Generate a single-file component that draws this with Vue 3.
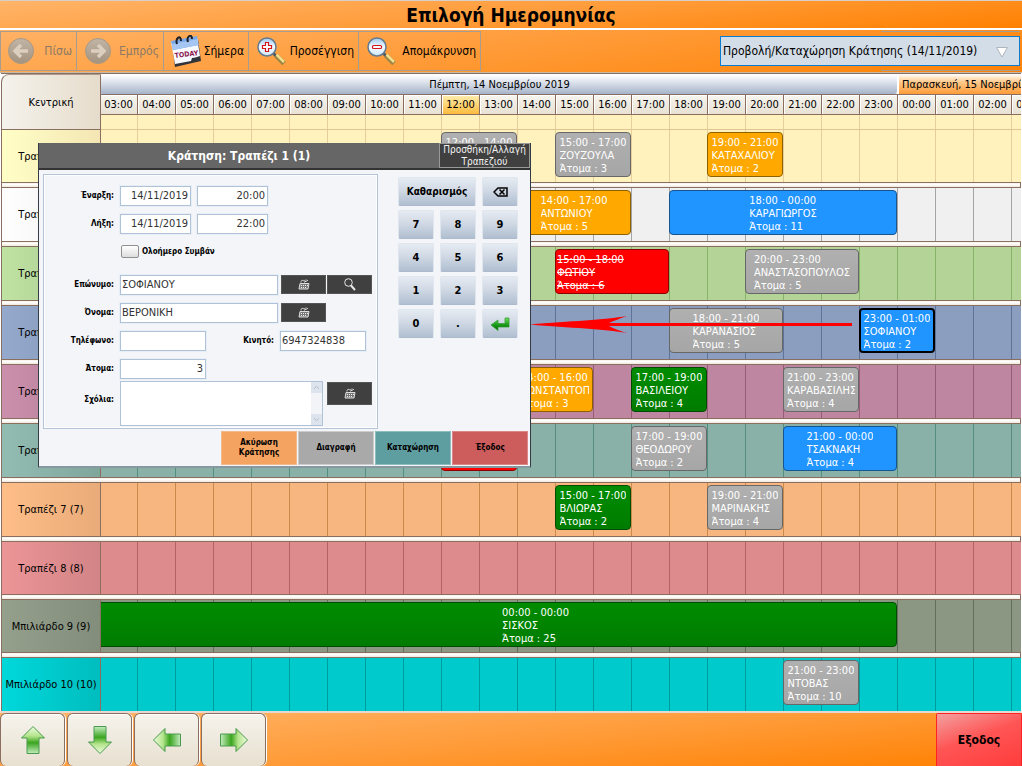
<script setup>
import { ref } from 'vue'

const START = 3
const hours = Array.from({ length: 25 }, (_, i) => String((START + i) % 24).padStart(2, '0') + ':00')

const rows = [
  { name: 'Τραπέζι 1 (1)', tone: 'cream', short: true, events: [
    { from: 12, to: 14, time: '12:00 - 14:00', who: 'ΠΑΠΠΑΣ', people: 2, kind: 'gray' },
    { from: 15, to: 17, time: '15:00 - 17:00', who: 'ΖΟΥΖΟΥΛΑ', people: 3, kind: 'gray' },
    { from: 19, to: 21, time: '19:00 - 21:00', who: 'ΚΑΤΑΧΑΛΙΟΥ', people: 2, kind: 'amber' }] },
  { name: 'Τραπέζι 2 (2)', tone: 'white', events: [
    { from: 14, to: 17, time: '14:00 - 17:00', who: 'ΑΝΤΩΝΙΟΥ', people: 5, kind: 'amber' },
    { from: 18, to: 24, time: '18:00 - 00:00', who: 'ΚΑΡΑΓΙΩΡΓΟΣ', people: 11, kind: 'blue' }] },
  { name: 'Τραπέζι 3 (3)', tone: 'lime', events: [
    { from: 15, to: 18, time: '15:00 - 18:00', who: 'ΦΩΤΙΟΥ', people: 6, kind: 'red' },
    { from: 20, to: 23, time: '20:00 - 23:00', who: 'ΑΝΑΣΤΑΣΟΠΟΥΛΟΣ', people: 5, kind: 'gray' }] },
  { name: 'Τραπέζι 4 (4)', tone: 'steel', events: [
    { from: 18, to: 21, time: '18:00 - 21:00', who: 'ΚΑΡΑΝΑΣΙΟΣ', people: 5, kind: 'gray' },
    { from: 23, to: 25, time: '23:00 - 01:00', who: 'ΣΟΦΙΑΝΟΥ', people: 2, kind: 'blue selected' }] },
  { name: 'Τραπέζι 5 (5)', tone: 'mauve', events: [
    { from: 14, to: 16, time: '14:00 - 16:00', who: 'ΚΩΝΣΤΑΝΤΟΠΟΥΛΟΣ', people: 3, kind: 'amber' },
    { from: 17, to: 19, time: '17:00 - 19:00', who: 'ΒΑΣΙΛΕΙΟΥ', people: 4, kind: 'green' },
    { from: 21, to: 23, time: '21:00 - 23:00', who: 'ΚΑΡΑΒΑΣΙΛΗΣ', people: 4, kind: 'gray' }] },
  { name: 'Τραπέζι 6 (6)', tone: 'sage', events: [
    { from: 12, to: 14, time: '12:00 - 14:00', who: 'ΝΙΚΟΥ', people: 2, kind: 'red' },
    { from: 17, to: 19, time: '17:00 - 19:00', who: 'ΘΕΟΔΩΡΟΥ', people: 2, kind: 'gray' },
    { from: 21, to: 24, time: '21:00 - 00:00', who: 'ΤΣΑΚΝΑΚΗ', people: 4, kind: 'blue' }] },
  { name: 'Τραπέζι 7 (7)', tone: 'peach', events: [
    { from: 15, to: 17, time: '15:00 - 17:00', who: 'ΒΛΙΩΡΑΣ', people: 2, kind: 'green' },
    { from: 19, to: 21, time: '19:00 - 21:00', who: 'ΜΑΡΙΝΑΚΗΣ', people: 4, kind: 'gray' }] },
  { name: 'Τραπέζι 8 (8)', tone: 'rose', short: true, events: [] },
  { name: 'Μπιλιάρδο 9 (9)', tone: 'moss', short: true, events: [
    { from: 3, to: 24, time: '00:00 - 00:00', who: 'ΣΙΣΚΟΣ', people: 25, kind: 'green continued' }] },
  { name: 'Μπιλιάρδο 10 (10)', tone: 'cyan', events: [
    { from: 21, to: 23, time: '21:00 - 23:00', who: 'ΝΤΟΒΑΣ', people: 10, kind: 'gray' }] }
]

const span = (e) => ({ gridColumn: `${e.from - START + 1} / ${e.to - START + 1}` })

const view = ref('day')
const form = ref({
  startDate: '14/11/2019', startTime: '20:00', endDate: '14/11/2019', endTime: '22:00', allDay: false,
  last: 'ΣΟΦΙΑΝΟΥ', first: 'ΒΕΡΟΝΙΚΗ', phone: '', mobile: '6947324838', people: '3', notes: ''
})
const keys = ['7', '8', '9', '4', '5', '6', '1', '2', '3', '0', '.']
const directions = [
  { label: 'Πάνω', turn: 'up' }, { label: 'Κάτω', turn: 'down' },
  { label: 'Αριστερά', turn: 'left' }, { label: 'Δεξιά', turn: 'right' }
]
</script>

<template>
  <div class="app">
    <svg class="defs" width="0" height="0" aria-hidden="true">
      <defs>
        <linearGradient id="arrowFill" x1="0" y1="0" x2="0" y2="1">
          <stop offset="0" stop-color="#effbe0" /><stop offset=".35" stop-color="#b4e58c" />
          <stop offset=".6" stop-color="#3aa51f" /><stop offset="1" stop-color="#c4ecc0" />
        </linearGradient>
        <linearGradient id="lensFill" x1="0" y1="0" x2="0" y2="1">
          <stop offset="0" stop-color="#9cc9ee" /><stop offset=".5" stop-color="#f4faff" /><stop offset="1" stop-color="#cfe9fb" />
        </linearGradient>
        <linearGradient id="discFill" x1="0" y1="0" x2="0" y2="1">
          <stop offset="0" stop-color="#c2b5a6" /><stop offset="1" stop-color="#a3937f" />
        </linearGradient>
        <linearGradient id="enterFill" x1="0" y1="0" x2="0" y2="1">
          <stop offset="0" stop-color="#6fe05a" /><stop offset=".6" stop-color="#149414" /><stop offset="1" stop-color="#0b6e0b" />
        </linearGradient>
        <symbol id="keyboard" viewBox="0 0 12 11">
          <path d="M2 4.500h9l-1 5.500H1z" fill="#777" stroke="#ddd" />
          <path d="M3 6.500h7M3 8.500h6" stroke="#eee" stroke-dasharray="1 1" />
          <path d="M3 3.500c0-2 1-2.500 2-2s2 .5 3-1M6 3.500c1-1.500 3-1 4-2.500" fill="none" stroke="#ddd" />
        </symbol>
      </defs>
    </svg>

    <h1 class="title">Επιλογή Ημερομηνίας</h1>

    <header class="toolbar">
      <button type="button" class="tool back" disabled>
        <svg width="28" height="28" viewBox="0 0 28 28"><circle cx="14" cy="14" r="12.500" fill="url(#discFill)" stroke="#a59886" /><path d="M14 8l-6 6 6 6M8 14h13" fill="none" stroke="#dccfc0" stroke-width="3.500" /></svg>
        <span>Πίσω</span>
      </button>
      <button type="button" class="tool forward" disabled>
        <svg width="28" height="28" viewBox="0 0 28 28"><circle cx="14" cy="14" r="12.500" fill="url(#discFill)" stroke="#a59886" /><path d="M14 8l6 6-6 6M20 14H7" fill="none" stroke="#dccfc0" stroke-width="3.500" /></svg>
        <span>Εμπρός</span>
      </button>
      <button type="button" class="tool today">
        <svg width="32" height="32" viewBox="0 0 32 32">
          <path d="M2 9l26-5 3 22-26 6z" fill="#30353c" />
          <path d="M1 7l26-5 3 19q-5 2-8 2l-1 3-16 3z" fill="#f8faff" />
          <path d="M1 6l26-5 1.500 9L3 15z" fill="#78a8e8" />
          <path d="M2 9l26-5 .5 6L3 15z" fill="#a5c6f3" />
          <path d="M7 9c-2-6 4-10 4-3M18 7c-2-6 4-9 4-3" fill="none" stroke="#1d2127" stroke-width="2" />
          <text x="5" y="23" transform="rotate(-7 5 23)" class="today-text">TODAY</text>
        </svg>
        <span>Σήμερα</span>
      </button>
      <button type="button" class="tool zoom-in">
        <svg width="30" height="30" viewBox="0 0 30 30"><path d="M17 17l4 4" stroke="#4d5963" stroke-width="3" /><path d="M20 19.500l8 8" stroke="#9a8747" stroke-width="5" /><path d="M20.500 18.500l7.500 7.500" stroke="#f2de8b" stroke-width="2.500" /><circle cx="11" cy="11" r="9" fill="url(#lensFill)" stroke="#617a90" stroke-width="1.500" /><path d="M9.500 6.500h3v3h3v3h-3v3h-3v-3h-3v-3h3z" fill="#fff" stroke="#d4141c" stroke-width="1.200" /></svg>
        <span>Προσέγγιση</span>
      </button>
      <button type="button" class="tool zoom-out">
        <svg width="30" height="30" viewBox="0 0 30 30"><path d="M17 17l4 4" stroke="#4d5963" stroke-width="3" /><path d="M20 19.500l8 8" stroke="#9a8747" stroke-width="5" /><path d="M20.500 18.500l7.500 7.500" stroke="#f2de8b" stroke-width="2.500" /><circle cx="11" cy="11" r="9" fill="url(#lensFill)" stroke="#617a90" stroke-width="1.500" /><rect x="6.500" y="9.500" width="9" height="3" rx="1" fill="#fff" stroke="#d4141c" stroke-width="1.200" /></svg>
        <span>Απομάκρυνση</span>
      </button>
      <div class="view">
        <div class="view-box">
          <select v-model="view" aria-label="Προβολή">
            <option value="day">Προβολή/Καταχώρηση Κράτησης (14/11/2019)</option>
          </select>
          <svg class="caret" width="14" height="12" viewBox="0 0 14 12"><path d="M1.500 1.500h11L7 11z" fill="#fff" stroke="#aeb4ba" /></svg>
        </div>
      </div>
    </header>

    <main class="planner">
      <div class="head">
        <div class="corner">Κεντρική</div>
        <div class="scale">
          <div class="days">
            <div class="day first">Πέμπτη, 14 Νοεμβρίου 2019</div>
            <div class="day next">Παρασκευή, 15 Νοεμβρίου 2019</div>
          </div>
          <div class="hours">
            <div v-for="(h, i) in hours" :key="i" class="hour" :class="{ now: h === '12:00' }">{{ h }}</div>
          </div>
          <div class="band"></div>
        </div>
      </div>

      <div v-for="r in rows" :key="r.name" class="row" :class="[r.tone, { short: r.short }]">
        <div class="name"><span>{{ r.name }}</span></div>
        <div class="lane">
          <article v-for="e in r.events" :key="e.from" class="event" :class="e.kind" :style="span(e)">
            <div class="info">{{ e.time }}<br />{{ e.who }}<br />Άτομα : {{ e.people }}</div>
          </article>
        </div>
      </div>

      <svg class="pointer" width="322" height="18" viewBox="0 0 322 18" aria-hidden="true">
        <path d="M0 8.500C40 5 75 4 97 0c-8 3-14 5-18 7h243v3H79c4 2 10 5 18 7-22-4-57-5-97-8.500z" fill="#f00" />
      </svg>

      <section class="dialog" role="dialog" aria-labelledby="dialog-title">
        <div class="dialog-bar">
          <h2 id="dialog-title">Κράτηση: Τραπέζι 1 (1)</h2>
          <button type="button" class="change">Προσθήκη/Αλλαγή Τραπεζιού</button>
        </div>
        <div class="dialog-main">
          <form class="fields" @submit.prevent>
            <div class="line">
              <label for="start">Έναρξη:</label>
              <input id="start" v-model="form.startDate" class="field date num" />
              <input v-model="form.startTime" class="field date num" aria-label="Ώρα έναρξης" />
            </div>
            <div class="line">
              <label for="end">Λήξη:</label>
              <input id="end" v-model="form.endDate" class="field date num" />
              <input v-model="form.endTime" class="field date num" aria-label="Ώρα λήξης" />
            </div>
            <div class="line check-line">
              <input id="allday" v-model="form.allDay" type="checkbox" class="check" />
              <label for="allday">Ολοήμερο Συμβάν</label>
            </div>
            <div class="line spaced">
              <label for="last">Επώνυμο:</label>
              <input id="last" v-model="form.last" class="field name-field" />
              <span class="pair">
                <button type="button" class="dark" aria-label="Πληκτρολόγιο"><svg width="12" height="11"><use href="#keyboard" /></svg></button>
                <button type="button" class="dark" aria-label="Αναζήτηση"><svg width="12" height="13" viewBox="0 0 12 13"><circle cx="4.500" cy="4.500" r="3.800" fill="none" stroke="#e8e8e8" /><path d="M7 7.500l4 4.500" stroke="#e8e8e8" stroke-width="2" /></svg></button>
              </span>
            </div>
            <div class="line">
              <label for="first">Όνομα:</label>
              <input id="first" v-model="form.first" class="field name-field" />
              <span class="pair">
                <button type="button" class="dark" aria-label="Πληκτρολόγιο"><svg width="12" height="11"><use href="#keyboard" /></svg></button>
              </span>
            </div>
            <div class="line">
              <label for="phone">Τηλέφωνο:</label>
              <input id="phone" v-model="form.phone" class="field phone" />
              <label for="mobile" class="second">Κινητό:</label>
              <input id="mobile" v-model="form.mobile" class="field phone" />
            </div>
            <div class="line">
              <label for="people">Άτομα:</label>
              <input id="people" v-model="form.people" class="field phone num" />
            </div>
            <div class="line notes-line">
              <label for="notes">Σχόλια:</label>
              <div class="notes">
                <textarea id="notes" v-model="form.notes"></textarea>
                <div class="scroll" aria-hidden="true">
                  <svg width="11" height="11" viewBox="0 0 11 11"><path d="M3 7l2.500-3L8 7" fill="none" stroke="#b8c2d0" /></svg>
                  <svg width="11" height="11" viewBox="0 0 11 11"><path d="M3 4l2.500 3L8 4" fill="none" stroke="#b8c2d0" /></svg>
                </div>
              </div>
              <button type="button" class="dark tall" aria-label="Πληκτρολόγιο"><svg width="12" height="11"><use href="#keyboard" /></svg></button>
            </div>
          </form>
          <div class="keypad">
            <button type="button" class="key clear">Καθαρισμός</button>
            <button type="button" class="key" aria-label="Διαγραφή χαρακτήρα"><svg width="15" height="10" viewBox="0 0 15 10"><path d="M5 1h9v8H5L1 5z" fill="none" stroke="#000" stroke-width="1.500" /><path d="M6.500 2.500l5 5M11.500 2.500l-5 5" stroke="#000" stroke-width="1.500" /></svg></button>
            <button v-for="k in keys" :key="k" type="button" class="key">{{ k }}</button>
            <button type="button" class="key" aria-label="Εισαγωγή"><svg width="20" height="14" viewBox="0 0 20 14"><path d="M15 1h4v9H8v3.500L1 8l7-5v3.500h7z" fill="url(#enterFill)" stroke="#2c9a28" stroke-width=".7" /></svg></button>
          </div>
        </div>
        <div class="actions">
          <button type="button" class="action cancel">Ακύρωση<br />Κράτησης</button>
          <button type="button" class="action delete">Διαγραφή</button>
          <button type="button" class="action save">Καταχώρηση</button>
          <button type="button" class="action close">Έξοδος</button>
        </div>
      </section>
    </main>

    <footer class="footer">
      <button v-for="d in directions" :key="d.turn" type="button" class="nav" :aria-label="d.label">
        <svg :class="d.turn" width="28" height="30" viewBox="0 0 28 30"><path d="M14 1.500L25.500 13H20v15.500H8V13H2.500z" fill="url(#arrowFill)" stroke="#4a9a50" /></svg>
      </button>
      <button type="button" class="exit">Εξοδος</button>
    </footer>
  </div>
</template>

<style>
body { margin: 0; background: #fff; }
</style>

<style scoped>
.app, button, input, textarea, select { font-family: "DejaVu Sans Condensed", "Noto Sans", sans-serif; }
.app { font-size: 11px; color: #000; min-height: 100vh; display: flex; flex-direction: column; overflow: hidden; }
.app *, .app *::before { box-sizing: border-box; }
.defs { position: absolute; }
button { margin: 0; padding: 0; color: #000; cursor: pointer; }

.title { margin: 0; height: 28px; line-height: 29px; text-align: center; font-size: 19px; font-weight: bold; border-top: 1px solid #d8d0c8; background: linear-gradient(175deg, #ffb469 0%, #ff9c3a 50%, #ff8000 100%); }
.toolbar { height: 43px; margin-top: 2px; padding-top: 1px; display: flex; background: linear-gradient(172deg, #ffb266 0%, #ff9a36 50%, #ff8205 100%); border-bottom: 1px solid #c8b8a8; }
.tool { height: 40px; display: flex; align-items: center; justify-content: space-between; border: 1px solid #a69c90; border-left-width: 0; background: none; font-size: 12px; padding: 0 4px 0 7px; white-space: nowrap; }
.tool svg { flex: none; }
.tool:disabled { color: #8d7a66; }
.back { width: 77px; border-left-width: 1px; padding-left: 6px; }
.forward { width: 87px; }
.today { width: 85px; padding-left: 6px; }
.zoom-in { width: 110px; }
.zoom-out { width: 122px; }
.today-text { font: bold 7px "DejaVu Sans Condensed", sans-serif; fill: #8b1550; }
.view { margin-left: auto; margin-right: 2px; width: 300px; height: 40px; display: flex; align-items: center; background: linear-gradient(#a69c90, #a69c90) right top / 139px 1px no-repeat, linear-gradient(#a69c90, #a69c90) right bottom / 139px 1px no-repeat; }
.view-box { position: relative; width: 100%; }
select { width: 100%; height: 30px; appearance: none; border: 1px solid #0b7bd0; border-radius: 0; background: #d3dde7; font-size: 12px; padding: 0 20px 0 2px; color: #000; }
.caret { position: absolute; right: 11px; top: 10px; pointer-events: none; }

.planner { position: relative; padding-left: 1px; border-right: 1px solid #fff; border-bottom: 2px solid #e4d8d0; overflow: hidden; --line: #8a6f60; }
.head { display: flex; height: 57px; border-top: 1px solid var(--line); border-bottom: 1px solid #e0c494; }
.corner { flex: none; width: 100px; display: flex; align-items: center; justify-content: center; border: 1px solid var(--line); border-top-color: #b09a8c; border-radius: 8px 0 0 0; margin-bottom: -1px; background: linear-gradient(90deg, #f4f2ec, #e6dccb); z-index: 1; }
.scale { flex: 1; min-width: 0; margin-left: -2px; overflow: hidden; background: #fff2bc; }
.days { display: flex; height: 21px; border-bottom: 1px solid var(--line); background: #fff; }
.day { line-height: 21px; height: 20px; white-space: nowrap; overflow: hidden; flex: none; }
.first { width: 800px; text-align: center; padding-left: 3px; background: linear-gradient(#fff 5%, #d9dfe9 45%, #a5b3c9); border-right: 2px solid #fff; border-radius: 0 0 4px 4px; }
.next { flex: 1; padding-left: 3px; background: linear-gradient(#fff, #ffc98b 40%, #ff9c38); }
.hours { display: flex; height: 20px; border-bottom: 1px solid var(--line); }
.hour { flex: none; width: 38px; height: 19px; line-height: 19px; text-align: center; border-right: 1px solid var(--line); background: linear-gradient(#f7f5f0, #e8e1d3); box-shadow: inset 1px 1px #fff; }
.hour:first-child { width: 39px; padding-left: 1px; }
.now { background: linear-gradient(#ffeeb0, #fdbb3d); }
.band { height: 14px; background: repeating-linear-gradient(90deg, #e6cf9c 0 1px, transparent 1px 38px); }

.row { display: flex; height: 59px; padding-bottom: 6px; background: var(--cell); position: relative; }
.row::before { content: ""; position: absolute; left: 0; right: 0; bottom: 0; height: 6px; border: 1px solid var(--line); background: linear-gradient(#f6f0e6, #fff 40%, #efe7da); z-index: 1; }
.row.short { height: 58px; }
.row:nth-of-type(11) { height: 53px; padding-bottom: 0; }
.row:nth-of-type(11)::before { display: none; }
.name { flex: none; width: 100px; margin-right: -2px; z-index: 1; display: flex; align-items: center; justify-content: center; border: 1px solid var(--line); border-width: 0 1px; background: linear-gradient(90deg, var(--a), var(--b)); white-space: nowrap; }
.lane { flex: 1; min-width: 0; display: grid; grid-template-columns: repeat(25, 38px); align-items: start; padding-top: 2px; overflow: hidden; background: repeating-linear-gradient(90deg, var(--tick) 0 1px, transparent 1px 38px); }
.cream { --cell: #fff2bc; --tick: #e6cf9c; --a: #ffffc6; --b: #f4e6b4; }
.white { --cell: #f0f0f0; --tick: #a4a4a4; --a: #fff; --b: #eee; }
.lime { --cell: #b4d497; --tick: #87b368; --a: #bfe3a3; --b: #a8c88e; }
.steel { --cell: #8c9ebf; --tick: #5f7298; --a: #94a9cc; --b: #8496b6; }
.mauve { --cell: #be86a1; --tick: #985c79; --a: #cb8fac; --b: #b27e97; }
.sage { --cell: #89b1a7; --tick: #548e80; --a: #92bcb2; --b: #80a69c; }
.peach { --cell: #f7b580; --tick: #c98a4c; --a: #ffbe88; --b: #e9ab79; }
.rose { --cell: #de8b8d; --tick: #b86163; --a: #ec9597; --b: #d28486; }
.moss { --cell: #8b9683; --tick: #626d5b; --a: #94a08c; --b: #828d7b; }
.cyan { --cell: #00cacc; --tick: #009c9e; --a: #00d8da; --b: #00bdbf; }

.event { height: 45px; display: flex; justify-content: center; border: 1px solid #676767; border-radius: 4px; padding: 3px 3px 0; color: #fff; line-height: 13px; overflow: hidden; }
.info { white-space: nowrap; overflow: hidden; height: 39px; }
.gray { background: linear-gradient(#b0b0b0, #a6a6a6); }
.amber { background: #ffa900; border-color: #8d6000; }
.blue { background: #2094ff; border-color: #175590; }
.green { background: linear-gradient(#008c00, #007c00); border-color: #004c00; }
.red { background: #f00; border-color: #8d0000; text-decoration: line-through; justify-content: flex-start; padding-left: 1px; }
.selected { border: 2px solid #000; padding: 2px 2px 0; }
.continued { border-radius: 0 4px 4px 0; padding-left: 78px; }

.pointer { position: absolute; left: 530px; top: 243px; z-index: 1; }

.dialog { position: absolute; left: 38px; top: 70px; width: 493px; background: #f3f5f8; border: solid #333b45; border-width: 0 1px 2px 1px; border-bottom-color: #8898a0; z-index: 2; }
.dialog-bar { height: 27px; display: flex; background: #666; border-bottom: 2px solid #333; color: #fff; }
.dialog-bar h2 { flex: 1; margin: 0; font-size: 12px; line-height: 26px; text-align: center; }
.change { width: 91px; height: 25px; border: 1px solid #999; background: #404040; color: #f2f2f2; font-size: 10px; line-height: 12px; }
.dialog-main { display: flex; gap: 20px; padding: 4px 0 0 4px; }
.fields { width: 335px; height: 255px; border: 1px solid #b4c5d8; box-shadow: inset 0 0 0 1px #fff; padding: 11px 0 0; display: flex; flex-direction: column; gap: 9px; }
.line { display: flex; height: 19px; align-items: center; gap: 6px; }
.line label { width: 70px; text-align: right; font-size: 8px; font-weight: bold; white-space: nowrap; }
.line .second { width: 62px; }
.field { height: 20px; border: 1px solid #b0c2d8; border-radius: 0; background: #fff; padding: 0 2px 0 1px; font-size: 11px; color: #333; outline: 0; min-width: 0; box-shadow: 0 0 0 1px #e8eef5; }
.num { text-align: right; }
.date { width: 71px; }
.name-field { width: 158px; }
.phone { width: 86px; }
.pair { display: flex; gap: 1px; margin-left: -3px; }
.dark { width: 45px; height: 19px; border: 1px solid #555; background: #404040; display: flex; align-items: center; justify-content: center; }
.tall { height: 23px; }
.check-line { padding-left: 77px; gap: 3px; }
.check-line label { width: auto; }
.check { appearance: none; margin: 0; width: 18px; height: 13px; border: 1px solid #909090; border-radius: 2px; background: linear-gradient(#fff, #ddd); }
.spaced { margin-top: 5px; }
.notes-line { height: 45px; margin-top: -6px; align-items: flex-start; }
.notes-line label { line-height: 38px; }
.notes { width: 203px; height: 45px; display: flex; border: 1px solid #b0c2d8; background: #fff; }
.notes textarea { flex: 1; min-width: 0; border: 0; padding: 2px; resize: none; outline: 0; font-size: 11px; background: #fff; }
.scroll { width: 11px; display: flex; flex-direction: column; justify-content: space-between; background: #f2f4f8; }
.scroll svg { background: #dde4ee; }
.notes-line .dark { margin-left: -2px; margin-top: 1px; }

.keypad { display: grid; grid-template-columns: repeat(3, 36px); grid-auto-rows: 29px; gap: 4px 6px; padding-top: 3px; align-content: start; }
.key { border: 1px solid #dfe6ee; border-bottom-color: #adbace; border-radius: 2px; background: linear-gradient(#e6ebf2, #ced7e3 50%, #b0bfd1); font-size: 11px; font-weight: bold; display: flex; align-items: center; justify-content: center; }
.clear { grid-column: span 2; font-size: 10px; }
.actions { display: flex; justify-content: flex-end; gap: 1px; padding: 2px 2px 1px; }
.action { width: 76px; height: 34px; border: 1px solid #ccc; font-size: 8px; line-height: 10px; font-weight: bold; }
.cancel { background: #f4a460; border-color: #f3b98a; }
.delete { background: #a9a9a9; }
.save { background: #5f9ea0; border-color: #8fbcbd; }
.close { background: #cd5c5c; border-color: #d98787; }

.footer { flex: 1; min-height: 52px; display: flex; gap: 2px; background: linear-gradient(175deg, #ffb469 0%, #ff9c3a 50%, #ff8000 100%); }
.nav { width: 65px; border: 1px solid #8a6f60; border-bottom: 0; border-radius: 6px; background: linear-gradient(#f5f3ec, #e8e0d0); box-shadow: inset 0 1px #fff, 1px 0 #fff; display: flex; align-items: center; justify-content: center; }
.down { transform: rotate(180deg); }
.left { transform: rotate(-90deg); }
.right { transform: rotate(90deg); }
.exit { margin-left: auto; width: 86px; border: 1px solid #f22; border-bottom: 0; border-radius: 2px 2px 0 0; background: linear-gradient(160deg, #f3a0a0, #ff5555 45%, #ff3c3c); font-size: 12px; font-weight: bold; }
</style>
